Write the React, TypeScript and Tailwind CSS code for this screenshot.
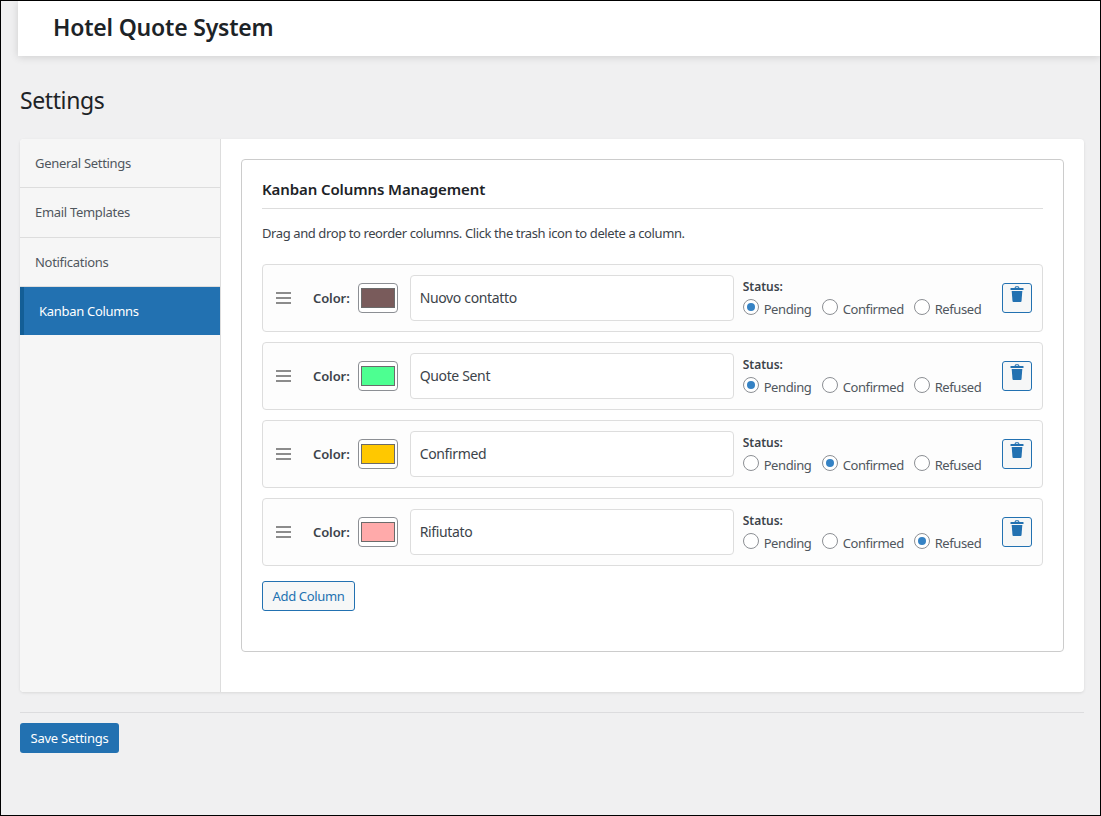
import React from 'react';

interface Column {
    name: string;
    color: string;
    status: 'Pending' | 'Confirmed' | 'Refused';
}

const columns: Column[] = [
    { name: 'Nuovo contatto', color: 'bg-[#795b5b]', status: 'Pending' },
    { name: 'Quote Sent', color: 'bg-[#4dff91]', status: 'Pending' },
    { name: 'Confirmed', color: 'bg-[#ffc800]', status: 'Confirmed' },
    { name: 'Rifiutato', color: 'bg-[#ffaaaa]', status: 'Refused' },
];

const tabs = [
    { label: 'General Settings', height: 'h-[49px] pt-[2px]' },
    { label: 'Email Templates', height: 'h-[50px]' },
    { label: 'Notifications', height: 'h-[49px] pt-[2px]' },
];

function Radio({ label, checked, className }: { label: string; checked: boolean; className: string }) {
    return (
        <span className={`flex items-center ${className}`}>
            <span className="flex h-4 w-4 shrink-0 items-center justify-center rounded-full border border-[#8c8f94] bg-white">
                {checked && <span className="h-2 w-2 rounded-full bg-[#3582c4]" />}
            </span>
            <span className="ml-[5px] mt-1 text-[13px] leading-[18px] tracking-[-0.4px] text-[#50575e]">{label}</span>
        </span>
    );
}

function TrashIcon() {
    return (
        <svg width="14" height="16" viewBox="0 0 14 16" fill="#2271b1" className="mb-2">
            <path d="M4.6 2 C4.6 0.6 5.6 0.2 7 0.2 C8.4 0.2 9.4 0.6 9.4 2 L8.4 2 C8.4 1.4 7.9 1.2 7 1.2 C6.1 1.2 5.6 1.4 5.6 2 Z" />
            <rect x="0.5" y="2" width="13" height="2" rx="0.3" />
            <path d="M1.7 5 H12.3 L11.5 15.2 C11.4 15.8 11.1 16 10.6 16 H3.4 C2.9 16 2.6 15.8 2.5 15.2 Z" />
        </svg>
    );
}

function ColumnRow({ column }: { column: Column }) {
    return (
        <div className="flex h-[68px] items-center rounded-[4px] border border-[#dddddd] bg-[#fdfdfd] pl-[13px]">
            <span className="flex w-[15px] flex-col gap-[3px]">
                <span className="h-[2px] bg-[#8c8c8c]" />
                <span className="h-[2px] bg-[#8c8c8c]" />
                <span className="h-[2px] bg-[#8c8c8c]" />
            </span>
            <span className="ml-[22px] mt-[2px] text-[13px] font-semibold tracking-[-0.1px] text-[#3c434a]">Color:</span>
            <span className="ml-[8px] flex h-[30px] w-10 items-center justify-center rounded-[4px] border border-[#8c8f94] bg-white">
                <span className={`h-5 w-[34px] border border-[#6b6b6b] ${column.color}`} />
            </span>
            <input
                type="text"
                defaultValue={column.name}
                className="ml-3 h-[46px] w-[324px] rounded-[4px] border border-[#dddddd] bg-white px-[9px] pb-[2px] text-[14px] tracking-[-0.35px] text-[#3c434a] outline-none"
            />
            <div className="ml-[9px] flex w-[259px] flex-col">
                <span className="text-[12px] font-semibold leading-[16px] text-[#3c434a]">Status:</span>
                <div className="mt-[1px] flex">
                    <Radio label="Pending" checked={column.status === 'Pending'} className="w-[79px]" />
                    <Radio label="Confirmed" checked={column.status === 'Confirmed'} className="w-[92px]" />
                    <Radio label="Refused" checked={column.status === 'Refused'} className="w-[80px]" />
                </div>
            </div>
            <button className="flex h-[30px] w-[30px] items-center justify-center rounded-[3px] border border-[#2271b1] bg-[#f6f7f7]">
                <TrashIcon />
            </button>
        </div>
    );
}

export default function App() {
    return (
        <div className="h-[816px] w-[1101px] overflow-hidden border border-black bg-[#f0f0f1] font-['Noto_Sans',sans-serif]">
            <header className="ml-[17px] flex h-[55px] items-center bg-white pb-[2px] pl-[35px] shadow-[0_1px_8px_rgba(0,0,0,0.15)]">
                <h1 className="text-[23px] font-semibold tracking-[-0.2px] text-[#1d2327]">Hotel Quote System</h1>
            </header>

            <main className="pl-[19px] pr-[16px]">
                <h2 className="mt-[27px] text-[23px] font-normal leading-[34px] tracking-[-0.4px] text-[#1d2327]">Settings</h2>

                <div className="mt-[22px] flex h-[553px] overflow-hidden rounded-[4px] bg-white shadow-[0_1px_3px_rgba(0,0,0,0.1)]">
                    <nav className="w-[201px] shrink-0 border-r border-[#dddddd] bg-[#f6f6f6]">
                        {tabs.map((tab) => (
                            <div
                                key={tab.label}
                                className={`flex items-center border-b border-[#dddddd] pl-[15px] text-[13px] tracking-[-0.3px] text-[#50575e] ${tab.height}`}
                            >
                                {tab.label}
                            </div>
                        ))}
                        <div className="flex h-12 items-center border-l-4 border-[#135e96] bg-[#2271b1] pl-[15px] pt-[2px] text-[13px] tracking-[-0.3px] text-white">
                            Kanban Columns
                        </div>
                    </nav>

                    <section className="flex-1 p-5">
                        <div className="h-[493px] rounded-[4px] border border-[#cccccc] bg-white px-5 pt-5">
                            <h3 className="border-b border-[#dddddd] pb-[9px] text-[15px] font-semibold leading-[19px] tracking-[-0.1px] text-[#1d2327]">
                                Kanban Columns Management
                            </h3>
                            <p className="mt-[15px] text-[13px] leading-[18px] tracking-[-0.4px] text-[#3c434a]">
                                Drag and drop to reorder columns. Click the trash icon to delete a column.
                            </p>
                            <div className="mt-[22px] flex flex-col gap-[10px]">
                                {columns.map((column) => (
                                    <ColumnRow key={column.name} column={column} />
                                ))}
                            </div>
                            <button className="mt-[15px] h-[30px] w-[93px] rounded-[3px] border border-[#2271b1] bg-[#f6f7f7] pt-[2px] text-[13px] tracking-[-0.35px] text-[#2271b1]">
                                Add Column
                            </button>
                        </div>
                    </section>
                </div>

                <div className="mt-5 border-t border-[#dcdcde] pt-[10px]">
                    <button className="h-[30px] w-[99px] rounded-[3px] bg-[#2271b1] pt-[2px] text-[13px] tracking-[-0.25px] text-white">
                        Save Settings
                    </button>
                </div>
            </main>
        </div>
    );
}
